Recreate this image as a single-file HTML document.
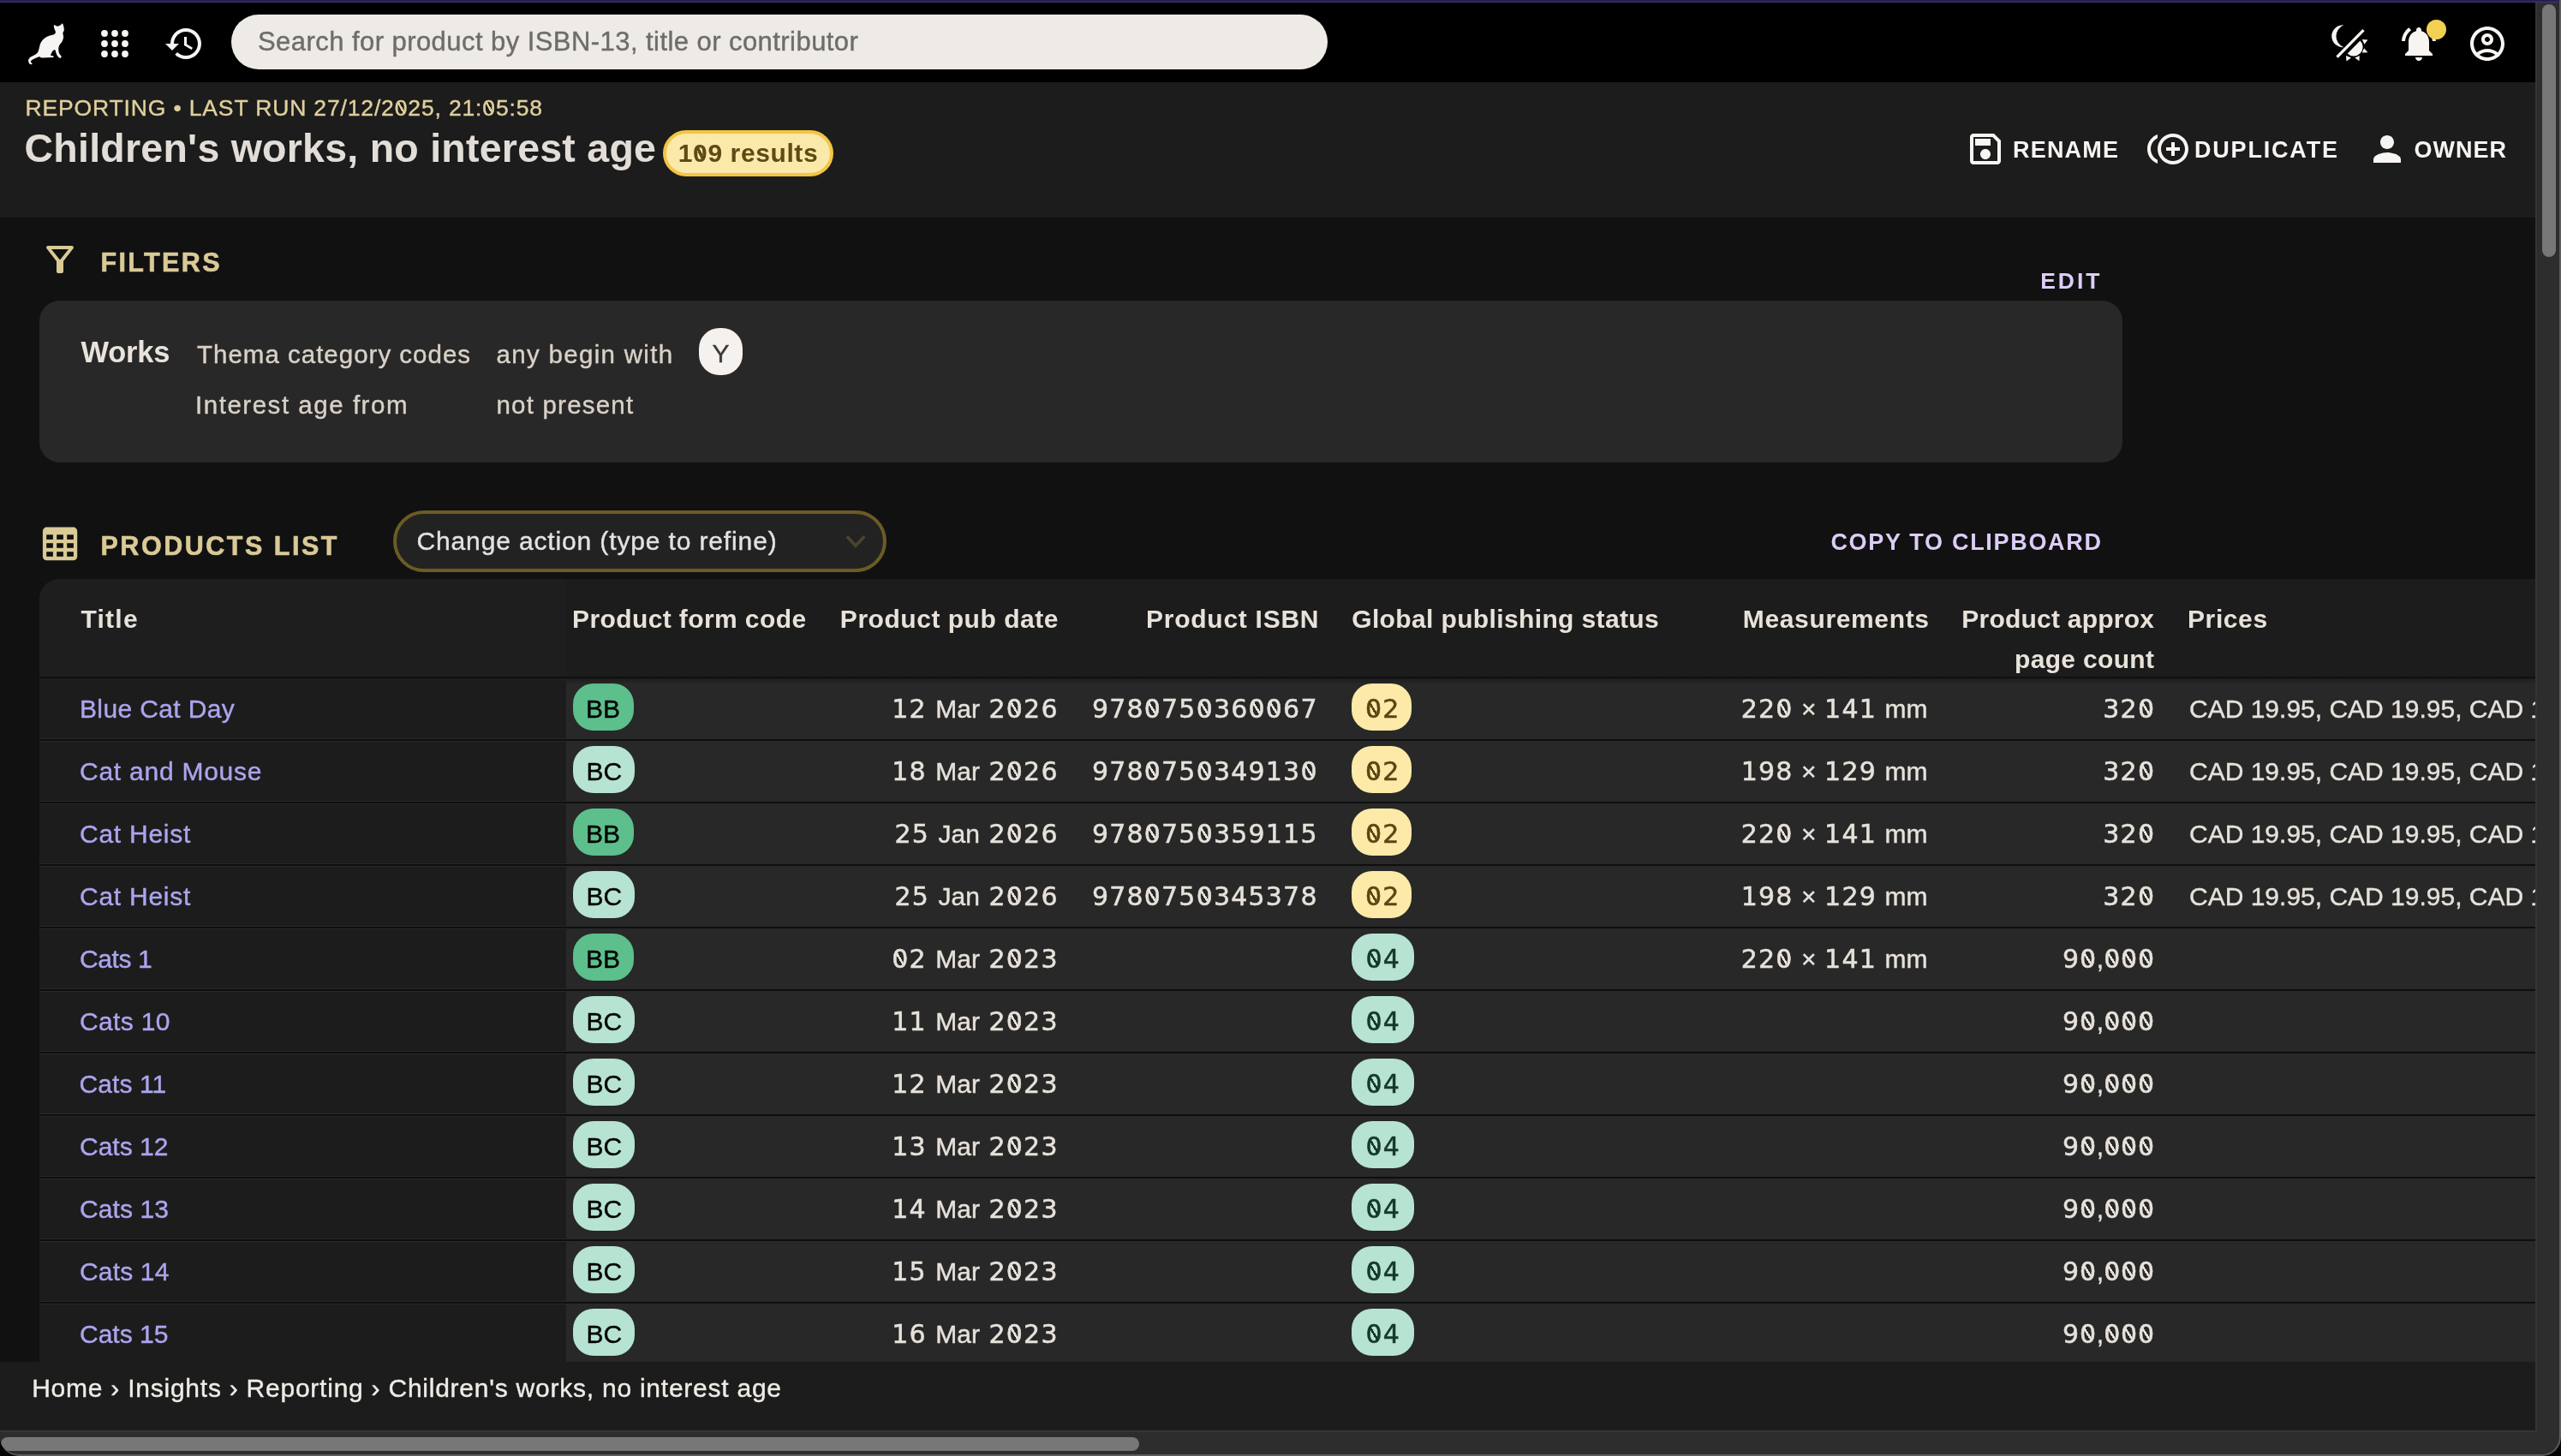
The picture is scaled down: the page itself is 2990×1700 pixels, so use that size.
<!DOCTYPE html>
<html lang="en"><head><meta charset="utf-8"><title>Children's works, no interest age</title>
<style>
*{box-sizing:border-box;margin:0;padding:0}
html,body{width:2990px;height:1700px;overflow:hidden;background:#050505;font-family:"Liberation Sans",sans-serif;color:#e6e1da}
.t{position:absolute;white-space:nowrap;display:block}
.abs{position:absolute}
svg{position:absolute;display:block}
.d{font-family:"DejaVu Sans","Liberation Sans",sans-serif;letter-spacing:1.2px;-webkit-text-stroke:0.5px}
.z{background:linear-gradient(to bottom left,transparent calc(50% - 1.3px),currentColor calc(50% - 1.3px),currentColor calc(50% + 1.3px),transparent calc(50% + 1.3px)) 4.4px 9.2px/9.4px 15.4px no-repeat}
a{color:inherit;text-decoration:none}
.zl{background:linear-gradient(to bottom left,transparent calc(50% - .045em),currentColor calc(50% - .045em),currentColor calc(50% + .045em),transparent calc(50% + .045em)) .128em .277em/.3em .54em no-repeat}
.zb{background:linear-gradient(to bottom left,transparent calc(50% - .055em),currentColor calc(50% - .055em),currentColor calc(50% + .055em),transparent calc(50% + .055em)) .168em .297em/.22em .5em no-repeat}
#app{position:absolute;left:0;top:0;width:2990px;height:1700px;will-change:transform;overflow:hidden;border-radius:0 0 22px 22px;background:#111111}
#frame{left:0;top:0;width:2990px;height:1700px;border-right:2px solid #5b5b5b;border-bottom:2px solid #5b5b5b;border-radius:0 0 22px 22px;pointer-events:none}
#topline{left:0;top:0;width:2990px;height:3px;background:linear-gradient(#2a1f4f 2px,#3f3572 2px)}
#appbar{left:0;top:3px;width:2960px;height:93px;background:#000}
#search{left:270px;top:17px;width:1280px;height:64px;border-radius:32px;background:#eeebe6}
#pagehead{left:0;top:96px;width:2960px;height:158px;background:#1c1c1c}
#badge{left:774px;top:152px;width:199px;height:54px;border-radius:27px;background:#fbe9aa;border:4px solid #f2c544}
#filterpanel{left:46px;top:351px;width:2432px;height:189px;border-radius:24px;background:#282828}
#ychip{left:816px;top:383px;width:51px;height:55px;border-radius:24px;background:#f5f1ee}
#select{left:459px;top:596px;width:576px;height:72px;border-radius:36px;background:#222222;border:4px solid #6c5b25}
#table{left:46px;top:676px;width:2914px;height:914px;overflow:hidden;border-top-left-radius:24px;background:#282828}
#thead{left:0;top:0;width:2914px;height:114px;background:linear-gradient(90deg,#1e1e1e 615px,#1c1c1c 615px)}
#theadline{left:0;top:114px;width:2914px;height:2px;background:#101010}
#theadshadow{left:0;top:116px;width:2914px;height:7px;background:linear-gradient(#1d1d1d,rgba(40,40,40,0))}
.row{position:absolute;left:0;width:2914px;height:73px;border-bottom:2px solid #0e0e0e}
.row .c0{position:absolute;left:0;top:1px;width:615px;height:69px;background:#1c1c1c}
.chip{position:absolute;top:6px;height:55px;border-radius:24px}
.chip.bb{left:623px;width:71px;background:#5dbf8c}
.chip.bc{left:623px;width:72px;background:#b6e3d2}
.chip.s02{left:1532px;width:70px;background:#fdeaa8}
.chip.s04{left:1532px;width:73px;background:#b6e3d2}
#footer{left:0;top:1590px;width:2960px;height:80px;background:#1c1c1c}
#scorner{left:2960px;top:1670px;width:30px;height:30px;background:#2d2d2d}
#hscroll{left:0;top:1670px;width:2962px;height:30px;background:#2d2d2d;border-top:2px solid #353535}
#hthumb{left:1px;top:1678px;width:1329px;height:16px;border-radius:8px;background:#777777}
#vscroll{left:2960px;top:3px;width:30px;height:1669px;background:#2d2d2d;border-left:2px solid #353535}
#vthumb{left:2968px;top:5px;width:16px;height:295px;border-radius:8px;background:#777777}
</style></head>
<body><div id="app">
<div class="abs" id="topline"></div>
<header class="abs" id="appbar"></header>
<svg id="cat" style="left:0;top:0" width="110" height="96" viewBox="0 0 110 96"><path fill="#f8f4f2" d="M63.0 28.9 C64.6 29.6 66.2 30.9 68.1 30.6 C69.9 30.2 71.4 28.4 72.9 27.3 C73.7 28.3 74.0 29.6 74.3 30.9 C74.5 32.4 75.0 33.8 74.8 35.2 C74.6 36.6 73.5 37.4 73.4 38.6 C73.3 40.4 74.4 42.0 74.1 43.8 C73.8 45.6 73.3 47.2 72.4 48.7 C71.4 50.4 69.7 51.7 69.0 53.5 C68.4 55.0 68.1 56.7 68.3 58.3 C68.5 60.0 68.7 61.7 69.5 63.1 C70.1 64.2 71.2 65.0 71.9 66.0 C71.6 66.8 71.1 67.5 70.5 67.9 C69.4 67.5 68.4 66.9 67.6 66.0 C66.7 65.0 66.1 63.8 65.7 62.6 C65.2 61.2 65.0 59.7 64.5 58.3 C63.8 58.0 62.9 58.2 62.3 58.75 C61.0 60.0 60.0 61.8 59.4 63.6 C59.2 64.0 59.1 64.4 59.2 64.8 C60.2 65.1 61.4 65.0 62.3 65.5 C62.7 65.8 62.7 66.4 62.5 66.9 L48.8 67.4 C47.8 67.3 47.0 66.6 46.2 66.2 C44.1 66.5 42.1 67.5 40.2 68.4 C38.8 69.1 37.3 69.7 36.3 70.8 C35.8 71.4 35.8 72.1 36.1 72.7 C36.5 73.5 37.4 74.0 38.0 74.6 C37.2 75.1 36.2 75.4 35.4 75.1 C34.4 74.7 33.8 73.7 33.5 72.7 C33.2 71.8 33.0 70.8 33.2 69.8 C33.4 68.8 34.1 67.9 34.9 67.2 C36.6 65.8 38.8 65.1 40.7 64.0 C42.0 63.3 43.2 62.4 44.0 61.2 C44.8 60.0 45.1 58.6 45.5 57.3 C46.0 55.4 46.2 53.4 46.9 51.5 C47.6 49.7 48.5 48.1 49.8 46.7 C51.1 45.2 52.7 43.8 54.6 42.9 C56.4 42.0 58.4 41.5 60.4 41.0 C61.5 40.7 62.8 40.5 63.75 39.8 C64.5 39.2 64.95 38.4 64.95 37.6 C64.9 36.4 64.1 35.3 63.75 34.2 C63.3 33.0 62.9 31.7 62.8 30.4 C62.8 29.9 62.8 29.4 63.0 28.9 Z"/></svg>
<svg id="apps" style="left:110px;top:27px" width="48" height="48" viewBox="0 0 24 24"><path fill="#f8f4f2" d="M4 8h4V4H4v4zm6 12h4v-4h-4v4zm-6 0h4v-4H4v4zm0-6h4v-4H4v4zm6 0h4v-4h-4v4zm6-10v4h4V4h-4zm-6 4h4V4h-4v4zm6 6h4v-4h-4v4zm0 6h4v-4h-4v4z" style="display:none"/><circle cx="6" cy="6" r="1.95" fill="#f8f4f2"/><circle cx="12" cy="6" r="1.95" fill="#f8f4f2"/><circle cx="18" cy="6" r="1.95" fill="#f8f4f2"/><circle cx="6" cy="12" r="1.95" fill="#f8f4f2"/><circle cx="12" cy="12" r="1.95" fill="#f8f4f2"/><circle cx="18" cy="12" r="1.95" fill="#f8f4f2"/><circle cx="6" cy="18" r="1.95" fill="#f8f4f2"/><circle cx="12" cy="18" r="1.95" fill="#f8f4f2"/><circle cx="18" cy="18" r="1.95" fill="#f8f4f2"/></svg>
<svg id="hist" style="left:190.5px;top:26.5px" width="48" height="48" viewBox="0 0 24 24"><path fill="#f8f4f2" d="M13 3c-4.97 0-9 4.03-9 9H1l3.89 3.89.07.14L9 12H6c0-3.87 3.13-7 7-7s7 3.13 7 7-3.13 7-7 7c-1.93 0-3.68-.79-4.94-2.06l-1.42 1.42C8.27 19.99 10.51 21 13 21c4.97 0 9-4.03 9-9s-4.03-9-9-9zm-1 5v5l4.28 2.54.72-1.21-3.5-2.08V8H12z"/></svg>
<div class="abs" id="search"></div>
<span class="t" id="ph" style="top:30.3px;font-size:31px;line-height:37px;font-weight:400;color:#6f6d69;-webkit-text-stroke:0.4px;letter-spacing:0.44px;left:301.0px;">Search for product by ISBN-13, title or contributor</span>
<svg id="theme" style="left:2710px;top:20px" width="70" height="60" viewBox="2710 20 70 60">
<path fill="#f8f4f2" d="M2736.4 29.3 A13 13 0 1 0 2736.4 55.2 A13.84 13.84 0 0 1 2736.4 29.3 Z"/>
<path stroke="#f8f4f2" stroke-width="3.3" d="M2759.5 35.2 L2728.5 66.6"/>
<path fill="#f8f4f2" d="M2755.5 47.4 A10.5 10.5 0 0 1 2740.7 62.4 Z"/>
<path fill="#f8f4f2" d="M2757.8 46.0 L2764.4 46.6 L2760.5 51.7 Z M2760.1 56.3 L2764.4 61.2 L2757.8 61.6 Z M2754.7 64.9 L2754.5 71.3 L2749.3 67.4 Z M2739.0 65.1 L2745.0 67.4 L2739.5 71.5 Z"/>
</svg>
<svg id="bell" style="left:2799.8px;top:27px" width="48" height="48" viewBox="0 0 24 24"><path fill="#f8f4f2" d="M7.58 4.08 6.15 2.65C3.75 4.48 2.17 7.3 2.03 10.5h2c.15-2.65 1.51-4.97 3.55-6.42zm12.39 6.42h2c-.15-3.2-1.73-6.02-4.12-7.85l-1.42 1.43c2.02 1.45 3.39 3.77 3.54 6.42zM18 11c0-3.07-1.64-5.64-4.5-6.32V4c0-.83-.67-1.5-1.5-1.5s-1.500.67-1.500 1.500v.68C7.630 5.360 6 7.920 6 11v5l-2 2v1h16v-1l-2-2v-5zm-6 11c.14 0 .27-.01.4-.04.65-.14 1.180-.58 1.440-1.180.1-.24.150-.5.150-.78h-4c.01 1.100.9 2 2.010 2z"/></svg>
<div class="abs" style="left:2833px;top:23.4px;width:22.8px;height:22.8px;border-radius:50%;background:#f4d052"></div>
<svg id="acct" style="left:2880px;top:27px" width="48" height="48" viewBox="0 0 24 24"><path fill="#f8f4f2" d="M12 2C6.48 2 2 6.48 2 12s4.48 10 10 10 10-4.48 10-10S17.52 2 12 2zM7.350 18.500C8.660 17.560 10.260 17 12 17s3.340.56 4.650 1.500C15.340 19.440 13.740 20 12 20s-3.340-.56-4.650-1.500zm10.790-1.380C16.450 15.800 14.320 15 12 15s-4.450.8-6.140 2.120C4.700 15.730 4 13.950 4 12c0-4.420 3.580-8 8-8s8 3.580 8 8c0 1.950-.7 3.730-1.860 5.120zM12 6c-1.930 0-3.500 1.570-3.500 3.500S10.070 13 12 13s3.500-1.570 3.500-3.500S13.930 6 12 6zm0 5c-.83 0-1.500-.67-1.500-1.500S11.170 8 12 8s1.500.67 1.500 1.500S12.830 11 12 11z"/></svg>
<section class="abs" id="pagehead"></section>
<span class="t" id="crumbtop" style="top:109.8px;font-size:26.5px;line-height:32px;font-weight:400;color:#dfcf9b;-webkit-text-stroke:0.4px;letter-spacing:0.85px;left:29.5px;">REPORTING • LAST RUN 27/12/2<span class="zl">0</span>25, 21:<span class="zl">0</span>5:58</span>
<h1 class="t" id="title" style="top:144.9px;font-size:46.5px;line-height:56px;font-weight:700;color:#e2ddd6;letter-spacing:0.25px;left:28.5px;">Children's works, no interest age</h1>
<div class="abs" id="badge"></div>
<span class="t" id="badget" style="top:160.6px;font-size:30px;line-height:36px;font-weight:700;color:#5f4a16;letter-spacing:0.60px;left:791.8px;">1<span class="zb">0</span>9 results</span>
<svg style="left:2294px;top:150px" width="48" height="48" viewBox="0 0 24 24"><path fill="#f8f4f2" d="M17 3H5c-1.110 0-2 .9-2 2v14c0 1.100.89 2 2 2h14c1.100 0 2-.9 2-2V7l-4-4zm2 16H5V5h11.170L19 7.830V19zm-7-7c-1.660 0-3 1.340-3 3s1.340 3 3 3 3-1.340 3-3-1.340-3-3-3zM6 6h9v4H6z"/></svg>
<span class="t" id="rename" style="top:158.6px;font-size:27px;line-height:32px;font-weight:700;color:#f8f4f2;letter-spacing:1.20px;left:2350.0px;">RENAME</span>
<svg style="left:2507px;top:150px" width="48" height="48" viewBox="0 0 24 24"><path fill="#f8f4f2" d="M16 8h-2v3h-3v2h3v3h2v-3h3v-2h-3zM2 12c0-2.790 1.640-5.200 4.010-6.320V3.520C2.520 4.760 0 8.090 0 12s2.520 7.240 6.010 8.480v-2.160C3.640 17.200 2 14.790 2 12zm13-9c-4.960 0-9 4.040-9 9s4.040 9 9 9 9-4.040 9-9-4.040-9-9-9zm0 16c-3.860 0-7-3.140-7-7s3.140-7 7-7 7 3.140 7 7-3.140 7-7 7z"/></svg>
<span class="t" id="dup" style="top:158.6px;font-size:27px;line-height:32px;font-weight:700;color:#f8f4f2;letter-spacing:1.81px;left:2562.0px;">DUPLICATE</span>
<svg style="left:2762.8px;top:150px" width="48" height="48" viewBox="0 0 24 24"><path fill="#f8f4f2" d="M12 12c2.210 0 4-1.790 4-4s-1.790-4-4-4-4 1.790-4 4 1.790 4 4 4zm0 2c-2.670 0-8 1.340-8 4v2h16v-2c0-2.660-5.330-4-8-4z"/></svg>
<span class="t" id="owner" style="top:158.6px;font-size:27px;line-height:32px;font-weight:700;color:#f8f4f2;letter-spacing:1.00px;left:2818.5px;">OWNER</span>
<svg style="left:46px;top:279px" width="48" height="48" viewBox="0 0 24 24"><path fill="#d9ca96" d="M7 6h10l-5.010 6.300L7 6zm-2.750-.39C6.270 8.200 10 13 10 13v6c0 .55.45 1 1 1h2c.55 0 1-.45 1-1v-6s3.720-4.800 5.740-7.390c.51-.66.040-1.610-.79-1.610H5.040c-.83 0-1.300.95-.79 1.610z"/></svg>
<h2 class="t" id="filters" style="top:287.9px;font-size:30.5px;line-height:37px;font-weight:700;color:#d9ca96;letter-spacing:2.38px;left:117.5px;-webkit-text-stroke:0.6px;">FILTERS</h2>
<span class="t" id="edit" style="top:311.8px;font-size:26.5px;line-height:32px;font-weight:700;color:#dccdf8;letter-spacing:3.00px;left:2382.2px;">EDIT</span>
<section class="abs" id="filterpanel"></section>
<span class="t" id="works" style="top:391.3px;font-size:34.5px;line-height:41px;font-weight:700;color:#e8e3dd;letter-spacing:-0.25px;left:94.5px;">Works</span>
<span class="t" id="f1a" style="top:396.0px;font-size:29.5px;line-height:35px;font-weight:400;color:#d9d1c7;-webkit-text-stroke:0.4px;letter-spacing:1.00px;left:230.0px;">Thema category codes</span>
<span class="t" id="f1b" style="top:396.0px;font-size:29.5px;line-height:35px;font-weight:400;color:#d9d1c7;-webkit-text-stroke:0.4px;letter-spacing:1.31px;left:579.5px;">any begin with</span>
<div class="abs" id="ychip"></div>
<span class="t" id="ychipt" style="top:395.1px;font-size:30px;line-height:36px;font-weight:400;color:#3a3a3a;-webkit-text-stroke:0.4px;left:831.5px;">Y</span>
<span class="t" id="f2a" style="top:454.8px;font-size:29.5px;line-height:35px;font-weight:400;color:#d9d1c7;-webkit-text-stroke:0.4px;letter-spacing:1.53px;left:228.0px;">Interest age from</span>
<span class="t" id="f2b" style="top:454.8px;font-size:29.5px;line-height:35px;font-weight:400;color:#d9d1c7;-webkit-text-stroke:0.4px;letter-spacing:1.20px;left:579.5px;">not present</span>
<svg style="left:40px;top:600px" width="70" height="70" viewBox="40 600 70 70"><rect x="49.9" y="615.6" width="40.3" height="38.7" rx="4.5" fill="#d9ca96"/><rect x="54.2" y="624.3" width="7.7" height="5.6" fill="#111"/><rect x="66.2" y="624.3" width="7.7" height="5.6" fill="#111"/><rect x="78.2" y="624.3" width="7.7" height="5.6" fill="#111"/><rect x="54.2" y="634.2" width="7.7" height="5.6" fill="#111"/><rect x="66.2" y="634.2" width="7.7" height="5.6" fill="#111"/><rect x="78.2" y="634.2" width="7.7" height="5.6" fill="#111"/><rect x="54.2" y="644.2" width="7.7" height="5.6" fill="#111"/><rect x="66.2" y="644.2" width="7.7" height="5.6" fill="#111"/><rect x="78.2" y="644.2" width="7.7" height="5.6" fill="#111"/></svg>
<h2 class="t" id="plist" style="top:618.9px;font-size:30.5px;line-height:37px;font-weight:700;color:#d9ca96;letter-spacing:2.52px;left:117.5px;-webkit-text-stroke:0.6px;">PRODUCTS LIST</h2>
<div class="abs" id="select"></div>
<span class="t" id="selt" style="top:614.1px;font-size:30px;line-height:36px;font-weight:400;color:#e2e2e2;-webkit-text-stroke:0.4px;letter-spacing:0.86px;left:486.5px;">Change action (type to refine)</span>
<svg style="left:980px;top:615px" width="40" height="36" viewBox="980 615 40 36"><path fill="none" stroke="#4a432e" stroke-width="3.7" d="M988.8 626.3 L999 637.2 L1009.2 626.3"/></svg>
<span class="t" id="copy" style="top:617.4px;font-size:27px;line-height:32px;font-weight:700;color:#dccdf8;letter-spacing:1.69px;left:2137.4px;">COPY TO CLIPBOARD</span>
<div class="abs" id="table">
<div class="abs" id="thead"></div>
<span class="t" id="h0" style="top:28.6px;font-size:30px;line-height:36px;font-weight:700;color:#e8e2da;letter-spacing:1.25px;left:48.5px;">Title</span>
<span class="t" id="h1" style="top:28.6px;font-size:30px;line-height:36px;font-weight:700;color:#e8e2da;letter-spacing:0.40px;left:622.0px;">Product form code</span>
<span class="t" id="h2" style="top:28.6px;font-size:30px;line-height:36px;font-weight:700;color:#e8e2da;letter-spacing:0.53px;left:1189.5px;transform:translateX(-100%);margin-left:0.53px;">Product pub date</span>
<span class="t" id="h3" style="top:28.6px;font-size:30px;line-height:36px;font-weight:700;color:#e8e2da;letter-spacing:0.73px;left:1493.5px;transform:translateX(-100%);margin-left:0.73px;">Product ISBN</span>
<span class="t" id="h4" style="top:28.6px;font-size:30px;line-height:36px;font-weight:700;color:#e8e2da;letter-spacing:0.37px;left:1532.2px;">Global publishing status</span>
<span class="t" id="h5" style="top:28.6px;font-size:30px;line-height:36px;font-weight:700;color:#e8e2da;letter-spacing:0.64px;left:2206.0px;transform:translateX(-100%);margin-left:0.64px;">Measurements</span>
<span class="t" id="h6a" style="top:28.6px;font-size:30px;line-height:36px;font-weight:700;color:#e8e2da;letter-spacing:0.23px;left:2469.0px;transform:translateX(-100%);margin-left:0.23px;">Product approx</span>
<span class="t" id="h6b" style="top:75.6px;font-size:30px;line-height:36px;font-weight:700;color:#e8e2da;letter-spacing:0.33px;left:2469.0px;transform:translateX(-100%);margin-left:0.33px;">page count</span>
<span class="t" id="h7" style="top:28.6px;font-size:30px;line-height:36px;font-weight:700;color:#e8e2da;letter-spacing:0.60px;left:2508.0px;">Prices</span>
<div class="abs" id="theadline"></div>
<div class="row" style="top:116px"><div class="c0"></div>
<span class="t" id="r0t" style="top:17.6px;font-size:30px;line-height:36px;font-weight:400;color:#aba5ee;-webkit-text-stroke:0.4px;letter-spacing:0.36px;left:47.0px;"><a>Blue Cat Day</a></span>
<div class="chip bb"></div>
<span class="t" id="r0f" style="top:17.6px;font-size:30px;line-height:36px;font-weight:400;color:#000;-webkit-text-stroke:0.4px;left:638.0px;">BB</span>
<span class="t" id="r0d" style="top:17.6px;font-size:30px;line-height:36px;font-weight:400;color:#e6e1da;-webkit-text-stroke:0.4px;left:1189.7px;transform:translateX(-100%);margin-left:0.00px;word-spacing:2.2px;"><span class="d">12</span> Mar <span class="d">2<span class="z">0</span>26</span></span>
<span class="t" id="r0i" style="top:17.6px;font-size:30px;line-height:36px;font-weight:400;color:#e6e1da;-webkit-text-stroke:0.4px;left:1492.7px;transform:translateX(-100%);margin-left:0.00px;"><span class="d">978<span class="z">0</span>75<span class="z">0</span>36<span class="z">0</span><span class="z">0</span>67</span></span>
<div class="chip s02"></div>
<span class="t" id="r0s" style="top:17.6px;font-size:30px;line-height:36px;font-weight:400;color:#5a4512;-webkit-text-stroke:0.4px;left:1548.0px;"><span class="d"><span class="z">0</span>2</span></span>
<span class="t" id="r0m" style="top:17.6px;font-size:30px;line-height:36px;font-weight:400;color:#e6e1da;-webkit-text-stroke:0.4px;left:2204.5px;transform:translateX(-100%);margin-left:0.00px;word-spacing:1.2px;"><span class="d">22<span class="z">0</span></span> × <span class="d">141</span> mm</span>
<span class="t" id="r0p" style="top:17.6px;font-size:30px;line-height:36px;font-weight:400;color:#e6e1da;-webkit-text-stroke:0.4px;left:2470.2px;transform:translateX(-100%);margin-left:0.00px;"><span class="d">32<span class="z">0</span></span></span>
<span class="t" id="r0r" style="top:17.6px;font-size:30px;line-height:36px;font-weight:400;color:#e6e1da;-webkit-text-stroke:0.4px;left:2510.0px;">CAD 19.95, CAD 19.95, CAD 19.95</span>
</div>
<div class="row" style="top:189px"><div class="c0"></div>
<span class="t" id="r1t" style="top:17.6px;font-size:30px;line-height:36px;font-weight:400;color:#aba5ee;-webkit-text-stroke:0.4px;letter-spacing:0.75px;left:47.0px;"><a>Cat and Mouse</a></span>
<div class="chip bc"></div>
<span class="t" id="r1f" style="top:17.6px;font-size:30px;line-height:36px;font-weight:400;color:#000;-webkit-text-stroke:0.4px;left:638.5px;">BC</span>
<span class="t" id="r1d" style="top:17.6px;font-size:30px;line-height:36px;font-weight:400;color:#e6e1da;-webkit-text-stroke:0.4px;left:1189.7px;transform:translateX(-100%);margin-left:0.00px;word-spacing:2.2px;"><span class="d">18</span> Mar <span class="d">2<span class="z">0</span>26</span></span>
<span class="t" id="r1i" style="top:17.6px;font-size:30px;line-height:36px;font-weight:400;color:#e6e1da;-webkit-text-stroke:0.4px;left:1492.7px;transform:translateX(-100%);margin-left:0.00px;"><span class="d">978<span class="z">0</span>75<span class="z">0</span>34913<span class="z">0</span></span></span>
<div class="chip s02"></div>
<span class="t" id="r1s" style="top:17.6px;font-size:30px;line-height:36px;font-weight:400;color:#5a4512;-webkit-text-stroke:0.4px;left:1548.0px;"><span class="d"><span class="z">0</span>2</span></span>
<span class="t" id="r1m" style="top:17.6px;font-size:30px;line-height:36px;font-weight:400;color:#e6e1da;-webkit-text-stroke:0.4px;left:2204.5px;transform:translateX(-100%);margin-left:0.00px;word-spacing:1.2px;"><span class="d">198</span> × <span class="d">129</span> mm</span>
<span class="t" id="r1p" style="top:17.6px;font-size:30px;line-height:36px;font-weight:400;color:#e6e1da;-webkit-text-stroke:0.4px;left:2470.2px;transform:translateX(-100%);margin-left:0.00px;"><span class="d">32<span class="z">0</span></span></span>
<span class="t" id="r1r" style="top:17.6px;font-size:30px;line-height:36px;font-weight:400;color:#e6e1da;-webkit-text-stroke:0.4px;left:2510.0px;">CAD 19.95, CAD 19.95, CAD 19.95</span>
</div>
<div class="row" style="top:262px"><div class="c0"></div>
<span class="t" id="r2t" style="top:17.6px;font-size:30px;line-height:36px;font-weight:400;color:#aba5ee;-webkit-text-stroke:0.4px;letter-spacing:0.75px;left:47.0px;"><a>Cat Heist</a></span>
<div class="chip bb"></div>
<span class="t" id="r2f" style="top:17.6px;font-size:30px;line-height:36px;font-weight:400;color:#000;-webkit-text-stroke:0.4px;left:638.0px;">BB</span>
<span class="t" id="r2d" style="top:17.6px;font-size:30px;line-height:36px;font-weight:400;color:#e6e1da;-webkit-text-stroke:0.4px;left:1189.7px;transform:translateX(-100%);margin-left:0.00px;word-spacing:2.2px;"><span class="d">25</span> Jan <span class="d">2<span class="z">0</span>26</span></span>
<span class="t" id="r2i" style="top:17.6px;font-size:30px;line-height:36px;font-weight:400;color:#e6e1da;-webkit-text-stroke:0.4px;left:1492.7px;transform:translateX(-100%);margin-left:0.00px;"><span class="d">978<span class="z">0</span>75<span class="z">0</span>359115</span></span>
<div class="chip s02"></div>
<span class="t" id="r2s" style="top:17.6px;font-size:30px;line-height:36px;font-weight:400;color:#5a4512;-webkit-text-stroke:0.4px;left:1548.0px;"><span class="d"><span class="z">0</span>2</span></span>
<span class="t" id="r2m" style="top:17.6px;font-size:30px;line-height:36px;font-weight:400;color:#e6e1da;-webkit-text-stroke:0.4px;left:2204.5px;transform:translateX(-100%);margin-left:0.00px;word-spacing:1.2px;"><span class="d">22<span class="z">0</span></span> × <span class="d">141</span> mm</span>
<span class="t" id="r2p" style="top:17.6px;font-size:30px;line-height:36px;font-weight:400;color:#e6e1da;-webkit-text-stroke:0.4px;left:2470.2px;transform:translateX(-100%);margin-left:0.00px;"><span class="d">32<span class="z">0</span></span></span>
<span class="t" id="r2r" style="top:17.6px;font-size:30px;line-height:36px;font-weight:400;color:#e6e1da;-webkit-text-stroke:0.4px;left:2510.0px;">CAD 19.95, CAD 19.95, CAD 19.95</span>
</div>
<div class="row" style="top:335px"><div class="c0"></div>
<span class="t" id="r3t" style="top:17.6px;font-size:30px;line-height:36px;font-weight:400;color:#aba5ee;-webkit-text-stroke:0.4px;letter-spacing:0.75px;left:47.0px;"><a>Cat Heist</a></span>
<div class="chip bc"></div>
<span class="t" id="r3f" style="top:17.6px;font-size:30px;line-height:36px;font-weight:400;color:#000;-webkit-text-stroke:0.4px;left:638.5px;">BC</span>
<span class="t" id="r3d" style="top:17.6px;font-size:30px;line-height:36px;font-weight:400;color:#e6e1da;-webkit-text-stroke:0.4px;left:1189.7px;transform:translateX(-100%);margin-left:0.00px;word-spacing:2.2px;"><span class="d">25</span> Jan <span class="d">2<span class="z">0</span>26</span></span>
<span class="t" id="r3i" style="top:17.6px;font-size:30px;line-height:36px;font-weight:400;color:#e6e1da;-webkit-text-stroke:0.4px;left:1492.7px;transform:translateX(-100%);margin-left:0.00px;"><span class="d">978<span class="z">0</span>75<span class="z">0</span>345378</span></span>
<div class="chip s02"></div>
<span class="t" id="r3s" style="top:17.6px;font-size:30px;line-height:36px;font-weight:400;color:#5a4512;-webkit-text-stroke:0.4px;left:1548.0px;"><span class="d"><span class="z">0</span>2</span></span>
<span class="t" id="r3m" style="top:17.6px;font-size:30px;line-height:36px;font-weight:400;color:#e6e1da;-webkit-text-stroke:0.4px;left:2204.5px;transform:translateX(-100%);margin-left:0.00px;word-spacing:1.2px;"><span class="d">198</span> × <span class="d">129</span> mm</span>
<span class="t" id="r3p" style="top:17.6px;font-size:30px;line-height:36px;font-weight:400;color:#e6e1da;-webkit-text-stroke:0.4px;left:2470.2px;transform:translateX(-100%);margin-left:0.00px;"><span class="d">32<span class="z">0</span></span></span>
<span class="t" id="r3r" style="top:17.6px;font-size:30px;line-height:36px;font-weight:400;color:#e6e1da;-webkit-text-stroke:0.4px;left:2510.0px;">CAD 19.95, CAD 19.95, CAD 19.95</span>
</div>
<div class="row" style="top:408px"><div class="c0"></div>
<span class="t" id="r4t" style="top:17.6px;font-size:30px;line-height:36px;font-weight:400;color:#aba5ee;-webkit-text-stroke:0.4px;letter-spacing:-0.40px;left:47.0px;"><a>Cats 1</a></span>
<div class="chip bb"></div>
<span class="t" id="r4f" style="top:17.6px;font-size:30px;line-height:36px;font-weight:400;color:#000;-webkit-text-stroke:0.4px;left:638.0px;">BB</span>
<span class="t" id="r4d" style="top:17.6px;font-size:30px;line-height:36px;font-weight:400;color:#e6e1da;-webkit-text-stroke:0.4px;left:1189.7px;transform:translateX(-100%);margin-left:0.00px;word-spacing:2.2px;"><span class="d"><span class="z">0</span>2</span> Mar <span class="d">2<span class="z">0</span>23</span></span>
<div class="chip s04"></div>
<span class="t" id="r4s" style="top:17.6px;font-size:30px;line-height:36px;font-weight:400;color:#16382a;-webkit-text-stroke:0.4px;left:1548.5px;"><span class="d"><span class="z">0</span>4</span></span>
<span class="t" id="r4m" style="top:17.6px;font-size:30px;line-height:36px;font-weight:400;color:#e6e1da;-webkit-text-stroke:0.4px;left:2204.5px;transform:translateX(-100%);margin-left:0.00px;word-spacing:1.2px;"><span class="d">22<span class="z">0</span></span> × <span class="d">141</span> mm</span>
<span class="t" id="r4p" style="top:17.6px;font-size:30px;line-height:36px;font-weight:400;color:#e6e1da;-webkit-text-stroke:0.4px;left:2469.8px;transform:translateX(-100%);margin-left:0.00px;"><span class="d" style="letter-spacing:0.8px">9<span class="z">0</span></span>,<span class="d" style="letter-spacing:0.8px"><span class="z">0</span><span class="z">0</span><span class="z">0</span></span></span>
</div>
<div class="row" style="top:481px"><div class="c0"></div>
<span class="t" id="r5t" style="top:17.6px;font-size:30px;line-height:36px;font-weight:400;color:#aba5ee;-webkit-text-stroke:0.4px;letter-spacing:0.33px;left:47.0px;"><a>Cats 10</a></span>
<div class="chip bc"></div>
<span class="t" id="r5f" style="top:17.6px;font-size:30px;line-height:36px;font-weight:400;color:#000;-webkit-text-stroke:0.4px;left:638.5px;">BC</span>
<span class="t" id="r5d" style="top:17.6px;font-size:30px;line-height:36px;font-weight:400;color:#e6e1da;-webkit-text-stroke:0.4px;left:1189.7px;transform:translateX(-100%);margin-left:0.00px;word-spacing:2.2px;"><span class="d">11</span> Mar <span class="d">2<span class="z">0</span>23</span></span>
<div class="chip s04"></div>
<span class="t" id="r5s" style="top:17.6px;font-size:30px;line-height:36px;font-weight:400;color:#16382a;-webkit-text-stroke:0.4px;left:1548.5px;"><span class="d"><span class="z">0</span>4</span></span>
<span class="t" id="r5p" style="top:17.6px;font-size:30px;line-height:36px;font-weight:400;color:#e6e1da;-webkit-text-stroke:0.4px;left:2469.8px;transform:translateX(-100%);margin-left:0.00px;"><span class="d" style="letter-spacing:0.8px">9<span class="z">0</span></span>,<span class="d" style="letter-spacing:0.8px"><span class="z">0</span><span class="z">0</span><span class="z">0</span></span></span>
</div>
<div class="row" style="top:554px"><div class="c0"></div>
<span class="t" id="r6t" style="top:17.6px;font-size:30px;line-height:36px;font-weight:400;color:#aba5ee;-webkit-text-stroke:0.4px;left:46.5px;letter-spacing:0.1px;"><a>Cats 11</a></span>
<div class="chip bc"></div>
<span class="t" id="r6f" style="top:17.6px;font-size:30px;line-height:36px;font-weight:400;color:#000;-webkit-text-stroke:0.4px;left:638.5px;">BC</span>
<span class="t" id="r6d" style="top:17.6px;font-size:30px;line-height:36px;font-weight:400;color:#e6e1da;-webkit-text-stroke:0.4px;left:1189.7px;transform:translateX(-100%);margin-left:0.00px;word-spacing:2.2px;"><span class="d">12</span> Mar <span class="d">2<span class="z">0</span>23</span></span>
<div class="chip s04"></div>
<span class="t" id="r6s" style="top:17.6px;font-size:30px;line-height:36px;font-weight:400;color:#16382a;-webkit-text-stroke:0.4px;left:1548.5px;"><span class="d"><span class="z">0</span>4</span></span>
<span class="t" id="r6p" style="top:17.6px;font-size:30px;line-height:36px;font-weight:400;color:#e6e1da;-webkit-text-stroke:0.4px;left:2469.8px;transform:translateX(-100%);margin-left:0.00px;"><span class="d" style="letter-spacing:0.8px">9<span class="z">0</span></span>,<span class="d" style="letter-spacing:0.8px"><span class="z">0</span><span class="z">0</span><span class="z">0</span></span></span>
</div>
<div class="row" style="top:627px"><div class="c0"></div>
<span class="t" id="r7t" style="top:17.6px;font-size:30px;line-height:36px;font-weight:400;color:#aba5ee;-webkit-text-stroke:0.4px;left:47.0px;"><a>Cats 12</a></span>
<div class="chip bc"></div>
<span class="t" id="r7f" style="top:17.6px;font-size:30px;line-height:36px;font-weight:400;color:#000;-webkit-text-stroke:0.4px;left:638.5px;">BC</span>
<span class="t" id="r7d" style="top:17.6px;font-size:30px;line-height:36px;font-weight:400;color:#e6e1da;-webkit-text-stroke:0.4px;left:1189.7px;transform:translateX(-100%);margin-left:0.00px;word-spacing:2.2px;"><span class="d">13</span> Mar <span class="d">2<span class="z">0</span>23</span></span>
<div class="chip s04"></div>
<span class="t" id="r7s" style="top:17.6px;font-size:30px;line-height:36px;font-weight:400;color:#16382a;-webkit-text-stroke:0.4px;left:1548.5px;"><span class="d"><span class="z">0</span>4</span></span>
<span class="t" id="r7p" style="top:17.6px;font-size:30px;line-height:36px;font-weight:400;color:#e6e1da;-webkit-text-stroke:0.4px;left:2469.8px;transform:translateX(-100%);margin-left:0.00px;"><span class="d" style="letter-spacing:0.8px">9<span class="z">0</span></span>,<span class="d" style="letter-spacing:0.8px"><span class="z">0</span><span class="z">0</span><span class="z">0</span></span></span>
</div>
<div class="row" style="top:700px"><div class="c0"></div>
<span class="t" id="r8t" style="top:17.6px;font-size:30px;line-height:36px;font-weight:400;color:#aba5ee;-webkit-text-stroke:0.4px;letter-spacing:0.08px;left:47.0px;"><a>Cats 13</a></span>
<div class="chip bc"></div>
<span class="t" id="r8f" style="top:17.6px;font-size:30px;line-height:36px;font-weight:400;color:#000;-webkit-text-stroke:0.4px;left:638.5px;">BC</span>
<span class="t" id="r8d" style="top:17.6px;font-size:30px;line-height:36px;font-weight:400;color:#e6e1da;-webkit-text-stroke:0.4px;left:1189.7px;transform:translateX(-100%);margin-left:0.00px;word-spacing:2.2px;"><span class="d">14</span> Mar <span class="d">2<span class="z">0</span>23</span></span>
<div class="chip s04"></div>
<span class="t" id="r8s" style="top:17.6px;font-size:30px;line-height:36px;font-weight:400;color:#16382a;-webkit-text-stroke:0.4px;left:1548.5px;"><span class="d"><span class="z">0</span>4</span></span>
<span class="t" id="r8p" style="top:17.6px;font-size:30px;line-height:36px;font-weight:400;color:#e6e1da;-webkit-text-stroke:0.4px;left:2469.8px;transform:translateX(-100%);margin-left:0.00px;"><span class="d" style="letter-spacing:0.8px">9<span class="z">0</span></span>,<span class="d" style="letter-spacing:0.8px"><span class="z">0</span><span class="z">0</span><span class="z">0</span></span></span>
</div>
<div class="row" style="top:773px"><div class="c0"></div>
<span class="t" id="r9t" style="top:17.6px;font-size:30px;line-height:36px;font-weight:400;color:#aba5ee;-webkit-text-stroke:0.4px;letter-spacing:0.17px;left:47.0px;"><a>Cats 14</a></span>
<div class="chip bc"></div>
<span class="t" id="r9f" style="top:17.6px;font-size:30px;line-height:36px;font-weight:400;color:#000;-webkit-text-stroke:0.4px;left:638.5px;">BC</span>
<span class="t" id="r9d" style="top:17.6px;font-size:30px;line-height:36px;font-weight:400;color:#e6e1da;-webkit-text-stroke:0.4px;left:1189.7px;transform:translateX(-100%);margin-left:0.00px;word-spacing:2.2px;"><span class="d">15</span> Mar <span class="d">2<span class="z">0</span>23</span></span>
<div class="chip s04"></div>
<span class="t" id="r9s" style="top:17.6px;font-size:30px;line-height:36px;font-weight:400;color:#16382a;-webkit-text-stroke:0.4px;left:1548.5px;"><span class="d"><span class="z">0</span>4</span></span>
<span class="t" id="r9p" style="top:17.6px;font-size:30px;line-height:36px;font-weight:400;color:#e6e1da;-webkit-text-stroke:0.4px;left:2469.8px;transform:translateX(-100%);margin-left:0.00px;"><span class="d" style="letter-spacing:0.8px">9<span class="z">0</span></span>,<span class="d" style="letter-spacing:0.8px"><span class="z">0</span><span class="z">0</span><span class="z">0</span></span></span>
</div>
<div class="row" style="top:846px"><div class="c0"></div>
<span class="t" id="r10t" style="top:17.6px;font-size:30px;line-height:36px;font-weight:400;color:#aba5ee;-webkit-text-stroke:0.4px;left:47.0px;"><a>Cats 15</a></span>
<div class="chip bc"></div>
<span class="t" id="r10f" style="top:17.6px;font-size:30px;line-height:36px;font-weight:400;color:#000;-webkit-text-stroke:0.4px;left:638.5px;">BC</span>
<span class="t" id="r10d" style="top:17.6px;font-size:30px;line-height:36px;font-weight:400;color:#e6e1da;-webkit-text-stroke:0.4px;left:1189.7px;transform:translateX(-100%);margin-left:0.00px;word-spacing:2.2px;"><span class="d">16</span> Mar <span class="d">2<span class="z">0</span>23</span></span>
<div class="chip s04"></div>
<span class="t" id="r10s" style="top:17.6px;font-size:30px;line-height:36px;font-weight:400;color:#16382a;-webkit-text-stroke:0.4px;left:1548.5px;"><span class="d"><span class="z">0</span>4</span></span>
<span class="t" id="r10p" style="top:17.6px;font-size:30px;line-height:36px;font-weight:400;color:#e6e1da;-webkit-text-stroke:0.4px;left:2469.8px;transform:translateX(-100%);margin-left:0.00px;"><span class="d" style="letter-spacing:0.8px">9<span class="z">0</span></span>,<span class="d" style="letter-spacing:0.8px"><span class="z">0</span><span class="z">0</span><span class="z">0</span></span></span>
</div>
<div class="abs" id="theadshadow"></div>
</div>
<footer class="abs" id="footer"></footer>
<nav class="t" id="bc" style="top:1602.6px;font-size:30px;line-height:36px;font-weight:400;color:#efebe6;-webkit-text-stroke:0.4px;letter-spacing:0.76px;left:37.2px;">Home › Insights › Reporting › Children's works, no interest age</nav>
<div class="abs" id="scorner"></div><div class="abs" id="hscroll"></div><div class="abs" id="vscroll"></div><div class="abs" id="hthumb"></div><div class="abs" id="vthumb"></div><div class="abs" id="frame"></div>
</div></body></html>
